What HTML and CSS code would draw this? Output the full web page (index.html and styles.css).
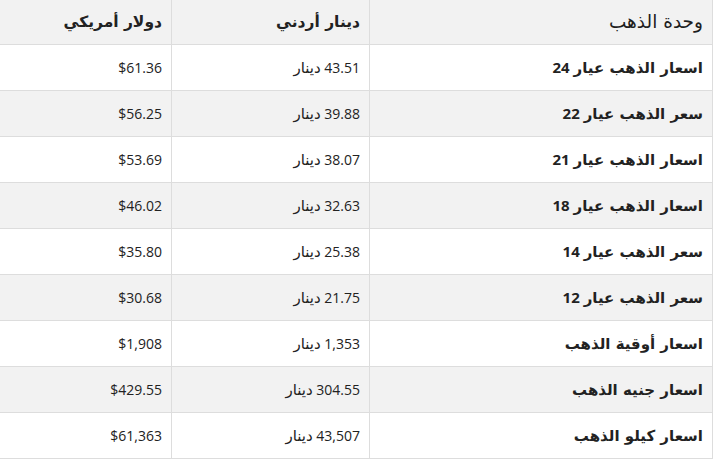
FILE: index.html
```html
<!DOCTYPE html>
<html lang="ar">
<head>
<meta charset="utf-8">
<link rel="stylesheet" href="styles.css">
</head>
<body>
<table class="prices">
  <thead>
    <tr>
      <th class="unit"><span class="ar">وحدة الذهب</span></th>
      <th class="strong"><span class="ar">دينار أردني</span></th>
      <th class="strong"><span class="ar">دولار أمريكي</span></th>
    </tr>
  </thead>
  <tbody>
    <tr><td class="name"><span class="ar">اسعار الذهب عيار</span> 24</td><td>43.51 <span class="ar">دينار</span></td><td>$61.36</td></tr>
    <tr><td class="name"><span class="ar">سعر الذهب عيار</span> 22</td><td>39.88 <span class="ar">دينار</span></td><td>$56.25</td></tr>
    <tr><td class="name"><span class="ar">اسعار الذهب عيار</span> 21</td><td>38.07 <span class="ar">دينار</span></td><td>$53.69</td></tr>
    <tr><td class="name"><span class="ar">اسعار الذهب عيار</span> 18</td><td>32.63 <span class="ar">دينار</span></td><td>$46.02</td></tr>
    <tr><td class="name"><span class="ar">سعر الذهب عيار</span> 14</td><td>25.38 <span class="ar">دينار</span></td><td>$35.80</td></tr>
    <tr><td class="name"><span class="ar">سعر الذهب عيار</span> 12</td><td>21.75 <span class="ar">دينار</span></td><td>$30.68</td></tr>
    <tr><td class="name"><span class="ar">اسعار أوقية الذهب</span></td><td>1,353 <span class="ar">دينار</span></td><td>$1,908</td></tr>
    <tr><td class="name"><span class="ar">اسعار جنيه الذهب</span></td><td>304.55 <span class="ar">دينار</span></td><td>$429.55</td></tr>
    <tr><td class="name"><span class="ar">اسعار كيلو الذهب</span></td><td>43,507 <span class="ar">دينار</span></td><td>$61,363</td></tr>
  </tbody>
</table>
</body>
</html>
```
FILE: styles.css
```css
html, body {
  margin: 0;
  padding: 0;
  background: #ffffff;
}
body {
  font-family: "Open Sans", "DejaVu Sans", sans-serif;
  font-size: 14px;
  color: #222222;
}
.ar {
  font-family: "DejaVu Sans", sans-serif;
  font-size: 15px;
}
.prices {
  direction: rtl;
  width: 712px;
  border-collapse: collapse;
  table-layout: fixed;
  margin: 0;
}
.prices th,
.prices td {
  border: 1px solid #dddddd;
  padding: 0 9px;
  height: 45px;
  text-align: right;
  vertical-align: middle;
  line-height: 21px;
}
.prices th:nth-child(1), .prices td:nth-child(1) { width: 324px; }
.prices th:nth-child(2), .prices td:nth-child(2) { width: 179px; }
.prices th:nth-child(3), .prices td:nth-child(3) { width: 153px; border-left: none; }
.prices thead th {
  background: #f2f2f2;
  height: 44px;
  font-size: 15px;
  border-top: none;
}
.prices th.unit { font-weight: normal; }
.prices th.unit .ar { font-size: 18.5px; color: #1e1e1e; }
.prices th.strong { font-weight: bold; }
.prices th.strong .ar { font-size: 15.5px; }
.prices tbody tr:nth-child(even) td { background: #f2f2f2; }
.prices td.name { font-weight: bold; font-size: 15px; }
.prices td.name .ar { font-size: 15px; }
```
